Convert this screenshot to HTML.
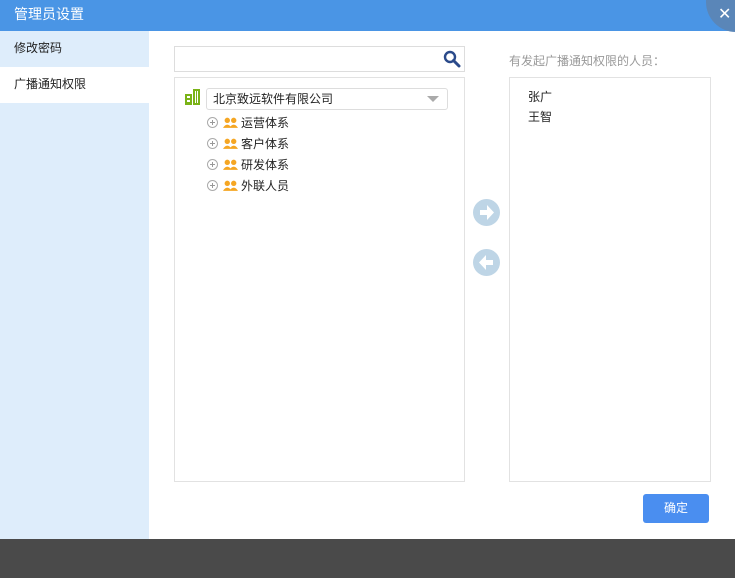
<!DOCTYPE html>
<html><head><meta charset="utf-8"><style>
*{margin:0;padding:0;box-sizing:border-box}
body{width:735px;height:578px;position:relative;background:#fff;font-family:"Liberation Sans","Noto Sans CJK SC",sans-serif;font-size:12px;color:#222;overflow:hidden}
.hdr{position:absolute;left:0;top:0;width:735px;height:31px;background:#4a95e5;color:#fff;font-size:14px;line-height:29px;padding-left:14px}
.close{position:absolute;left:706px;top:-28px;width:60px;height:60px;border-radius:50%;background:#5a86b8;}
.close span{position:absolute;left:12px;top:35px;color:#fff;font-size:16px;line-height:16px}
.side{position:absolute;left:0;top:31px;width:149px;height:508px;background:#deedfb}
.side div{height:36px;line-height:34px;padding-left:14px;font-size:12px}
.side .on{background:#fff}
.foot{position:absolute;left:0;top:539px;width:735px;height:39px;background:#4a4a4a}
.search{position:absolute;left:174px;top:46px;width:291px;height:26px;border:1px solid #ddd}
.tree{position:absolute;left:174px;top:77px;width:291px;height:405px;border:1px solid #e2e2e2}
.right{position:absolute;left:509px;top:77px;width:202px;height:405px;border:1px solid #e2e2e2}
.lbl{position:absolute;left:509px;top:52px;color:#999;font-size:12px}
.sel{position:absolute;left:206px;top:88px;width:242px;height:22px;border:1px solid #ddd;border-radius:3px;line-height:20px;padding-left:6px}
.sel:after{content:"";position:absolute;right:8px;top:7px;border-left:6px solid transparent;border-right:6px solid transparent;border-top:6px solid #aaa}
.node{position:absolute;left:207px;height:20px;line-height:20px}
.plus{display:inline-block;width:11px;height:11px;border:1px solid #aaa;border-radius:50%;position:relative;vertical-align:-1px;margin-right:5px}
.plus:before{content:"";position:absolute;left:2px;top:4px;width:5px;height:1px;background:#999}
.plus:after{content:"";position:absolute;left:4px;top:2px;width:1px;height:5px;background:#999}
.ppl{display:inline-block;width:15px;height:11px;vertical-align:-1px;margin-right:3px}
.arr{position:absolute;left:473px;width:27px;height:27px;border-radius:50%;background:#bed5e6}
.btn{position:absolute;left:643px;top:494px;width:66px;height:29px;background:#4a8ef0;border-radius:3px;color:#fff;text-align:center;line-height:29px;font-size:12px}
</style></head><body>
<div class="hdr">管理员设置<div class="close"><span>✕</span></div></div>
<div class="side"><div>修改密码</div><div class="on">广播通知权限</div></div>
<div class="search"><svg style="position:absolute;right:3px;top:3px" width="18" height="18" viewBox="0 0 18 18"><circle cx="7" cy="7" r="5" fill="none" stroke="#2a4a8a" stroke-width="2.4"/><path d="M10.5 10.5L16 16" stroke="#2a4a8a" stroke-width="3" stroke-linecap="round"/></svg></div>
<div class="tree"></div>
<svg style="position:absolute;left:185px;top:89px" width="15" height="16" viewBox="0 0 15 16"><rect x="0" y="5" width="7" height="11" fill="#7ab317"/><rect x="2" y="7" width="3" height="2" fill="#fff"/><rect x="2" y="11" width="3" height="2" fill="#fff"/><rect x="8" y="0" width="7" height="16" fill="#7ab317"/><rect x="10" y="2" width="3" height="12" fill="#fff"/><rect x="11" y="2" width="1" height="12" fill="#7ab317"/></svg>
<div class="sel">北京致远软件有限公司</div>
<div class="node" style="top:113px"><span class="plus"></span><svg class="ppl" viewBox="0 0 14 10"><circle cx="4" cy="3" r="2.5" fill="#f5a623"/><circle cx="10" cy="3" r="2.5" fill="#f5a623"/><path d="M0 10Q4 4 8 10ZM6 10Q10 4 14 10Z" fill="#f5a623"/></svg>运营体系</div>
<div class="node" style="top:134px"><span class="plus"></span><svg class="ppl" viewBox="0 0 14 10"><circle cx="4" cy="3" r="2.5" fill="#f5a623"/><circle cx="10" cy="3" r="2.5" fill="#f5a623"/><path d="M0 10Q4 4 8 10ZM6 10Q10 4 14 10Z" fill="#f5a623"/></svg>客户体系</div>
<div class="node" style="top:155px"><span class="plus"></span><svg class="ppl" viewBox="0 0 14 10"><circle cx="4" cy="3" r="2.5" fill="#f5a623"/><circle cx="10" cy="3" r="2.5" fill="#f5a623"/><path d="M0 10Q4 4 8 10ZM6 10Q10 4 14 10Z" fill="#f5a623"/></svg>研发体系</div>
<div class="node" style="top:176px"><span class="plus"></span><svg class="ppl" viewBox="0 0 14 10"><circle cx="4" cy="3" r="2.5" fill="#f5a623"/><circle cx="10" cy="3" r="2.5" fill="#f5a623"/><path d="M0 10Q4 4 8 10ZM6 10Q10 4 14 10Z" fill="#f5a623"/></svg>外联人员</div>
<div class="arr" style="top:199px"><svg width="27" height="27" viewBox="0 0 27 27"><path d="M7 11h7V6l7 7.5-7 7.5v-5H7z" fill="#fff"/></svg></div>
<div class="arr" style="top:249px"><svg width="27" height="27" viewBox="0 0 27 27"><path d="M20 11h-7V6l-7 7.5 7 7.5v-5h7z" fill="#fff"/></svg></div>
<div class="lbl">有发起广播通知权限的人员：</div>
<div class="right"><div style="position:absolute;left:18px;top:9px;line-height:20px">张广<br>王智</div></div>
<div class="btn">确定</div>
<div class="foot"></div>
</body></html>
